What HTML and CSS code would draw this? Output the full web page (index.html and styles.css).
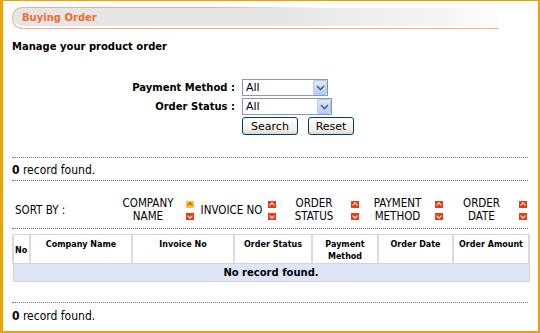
FILE: index.html
```html
<!DOCTYPE html>
<html lang="en">
<head>
    <meta charset="UTF-8">
    <title>Buying Order</title>
    <link rel="stylesheet" href="styles.css">
</head>
<body>
    <div class="frame">
        <div class="title-bar"><span>Buying Order</span></div>
        <h3 class="subtitle">Manage your product order</h3>

        <form class="filter">
            <label for="payment">Payment Method :</label>
            <div class="select-box w86">
                <select id="payment"><option>All</option></select>
                <span class="drop"><svg width="9" height="6" viewBox="0 0 9 6"><polyline points="1,1 4.5,4.5 8,1" fill="none" stroke="#4d6185" stroke-width="1.6"/></svg></span>
            </div>
            <label for="status">Order Status :</label>
            <div class="select-box w90">
                <select id="status"><option>All</option></select>
                <span class="drop"><svg width="9" height="6" viewBox="0 0 9 6"><polyline points="1,1 4.5,4.5 8,1" fill="none" stroke="#4d6185" stroke-width="1.6"/></svg></span>
            </div>
            <span></span>
            <div class="buttons">
                <button type="submit" class="btn-search">Search</button>
                <button type="reset" class="btn-reset">Reset</button>
            </div>
        </form>

        <div class="dotted"></div>
        <p class="count"><b>0</b> record found.</p>
        <div class="dotted"></div>

        <div class="sort-row">
            <div class="sort-label">SORT BY :</div>
            <div class="sort-col">COMPANY<br>NAME</div>
            <div class="arrows"><i class="up active"></i><i class="down"></i></div>
            <div class="sort-col">INVOICE NO</div>
            <div class="arrows"><i class="up"></i><i class="down"></i></div>
            <div class="sort-col">ORDER<br>STATUS</div>
            <div class="arrows"><i class="up"></i><i class="down"></i></div>
            <div class="sort-col">PAYMENT<br>METHOD</div>
            <div class="arrows"><i class="up"></i><i class="down"></i></div>
            <div class="sort-col">ORDER<br>DATE</div>
            <div class="arrows"><i class="up"></i><i class="down"></i></div>
        </div>
        <div class="dotted"></div>

        <table class="orders">
            <colgroup>
                <col style="width:17px"><col style="width:102px"><col style="width:102px"><col style="width:78px"><col style="width:66px"><col style="width:75px"><col style="width:76px">
            </colgroup>
            <thead>
                <tr>
                    <th class="mid">No</th>
                    <th>Company Name</th>
                    <th>Invoice No</th>
                    <th>Order Status</th>
                    <th>Payment<br>Method</th>
                    <th>Order Date</th>
                    <th>Order Amount</th>
                </tr>
            </thead>
            <tbody>
                <tr><td colspan="7" class="empty">No record found.</td></tr>
            </tbody>
        </table>

        <div class="dotted bottom"></div>
        <p class="count"><b>0</b> record found.</p>
    </div>
</body>
</html>
```

FILE: styles.css
```css
* {
    box-sizing: border-box;
    margin: 0;
    padding: 0;
}

body {
    font-family: 'DejaVu Sans', Verdana, sans-serif;
    font-size: 10px;
    color: #000;
    background: #fff;
}

.frame {
    width: 540px;
    height: 333px;
    border-style: solid;
    border-color: #eba300;
    border-width: 1px 2px 2px 3px;
    padding: 6px 10px 0 9px;
    overflow: hidden;
}

.title-bar {
    position: relative;
    width: 486px;
    height: 22px;
    border: 1px solid #f3ab8a;
    border-right: none;
    border-radius: 10px 0 0 10px;
    background: linear-gradient(to right, #e5e5e5 0%, #e6e6e6 55%, #f6f6f6 90%, #fdfdfd 100%);
    box-shadow: inset 0 -2px 0 #fff;
    padding-left: 9px;
    line-height: 19px;
}

/* top edge fades out toward the right */
.title-bar::after {
    content: "";
    position: absolute;
    top: -1px;
    left: 200px;
    right: 0;
    height: 1px;
    background: linear-gradient(to right, rgba(255, 255, 255, 0), #fff 40%);
}

.title-bar span {
    color: #f26b2d;
    font-weight: bold;
    font-size: 10px;
}

.subtitle {
    font-size: 10px;
    margin-top: 11px;
    line-height: 13px;
}

.filter {
    display: grid;
    grid-template-columns: 223px auto;
    column-gap: 7px;
    row-gap: 2px;
    margin-top: 26px;
    align-items: center;
}

.filter label {
    text-align: right;
    font-weight: bold;
    font-size: 10px;
}

.select-box {
    position: relative;
    height: 17px;
    border: 1px solid #7f9db9;
    background: #fff;
}

.w86 { width: 86px; }
.w90 { width: 90px; }

.select-box select {
    appearance: none;
    -webkit-appearance: none;
    border: none;
    outline: none;
    background: transparent;
    width: 100%;
    height: 15px;
    font-family: 'DejaVu Sans', Verdana, sans-serif;
    font-size: 11px;
    padding-left: 3px;
    line-height: 15px;
}

.drop {
    position: absolute;
    top: 0;
    right: 0;
    width: 14px;
    height: 15px;
    background: linear-gradient(#dfe8fb, #b8cbf3);
    border: 1px solid #b6c8ee;
    border-radius: 2px;
    display: flex;
    align-items: center;
    justify-content: center;
}

.buttons {
    display: flex;
    gap: 10px;
}

.buttons button {
    height: 18px;
    border: 1px solid #003c74;
    border-radius: 3px;
    background: linear-gradient(#fff, #f1f0ea 70%, #dcd9cc);
    font-family: 'DejaVu Sans', Verdana, sans-serif;
    font-size: 11px;
    color: #000;
    line-height: 15px;
}

.btn-search { width: 56px; }
.btn-reset { width: 46px; }

.dotted {
    border-top: 1px dotted #777;
    width: 516px;
}

.filter + .dotted { margin-top: 22px; }

.count {
    font-family: Tahoma, 'DejaVu Sans Condensed', 'DejaVu Sans', sans-serif;
    font-size: 12px;
    line-height: 14px;
    margin: 5px 0 3px;
}

.sort-row {
    display: grid;
    grid-template-columns: 100px 72px 13px 69px 13px 70px 13px 71px 13px 71px 11px;
    align-items: center;
    height: 47px;
    padding-top: 11px;
    font-family: Tahoma, 'DejaVu Sans Condensed', 'DejaVu Sans', sans-serif;
    font-size: 11.5px;
    line-height: 13px;
}

.sort-label {
    padding-left: 3px;
}

.sort-col {
    text-align: center;
}

.arrows {
    display: flex;
    flex-direction: column;
    gap: 5px;
    padding-left: 2px;
}

.arrows i {
    display: block;
    width: 8px;
    height: 7px;
    background: #ea3a16;
    position: relative;
}

.arrows i::after {
    content: "";
    position: absolute;
    left: 2px;
    width: 3px;
    height: 3px;
    border-color: #fff;
    border-style: solid;
    border-width: 0;
    transform: rotate(45deg);
}

.arrows i.up::after {
    top: 2px;
    border-top-width: 1px;
    border-left-width: 1px;
}

.arrows i.down::after {
    top: 1px;
    border-bottom-width: 1px;
    border-right-width: 1px;
}

.arrows i.active {
    background: #f9c243;
}

.arrows i.active::after {
    border-color: #d4301a;
}

.orders {
    margin-top: 5px;
    width: 516px;
    border-collapse: collapse;
    table-layout: fixed;
    border: 1px solid #d4d4d4;
}

.orders th {
    font-size: 8px;
    font-weight: bold;
    vertical-align: top;
    height: 27px;
    padding-top: 4px;
    line-height: 12px;
    border: 2px solid #dadada;
    border-top: 1px solid #d4d4d4;
    border-bottom: 1px solid #d4d4d4;
    text-align: center;
}

.orders th.mid {
    vertical-align: middle;
    padding-top: 3px;
    text-align: left;
    padding-left: 1px;
}

.orders .empty {
    background: #dfe5f8;
    height: 18px;
    text-align: center;
    font-weight: bold;
    font-size: 10px;
    border-bottom: 1px solid #d4d4d4;
}

.dotted.bottom {
    margin-top: 20px;
}

.dotted.bottom + .count {
    margin-top: 6px;
}
```
